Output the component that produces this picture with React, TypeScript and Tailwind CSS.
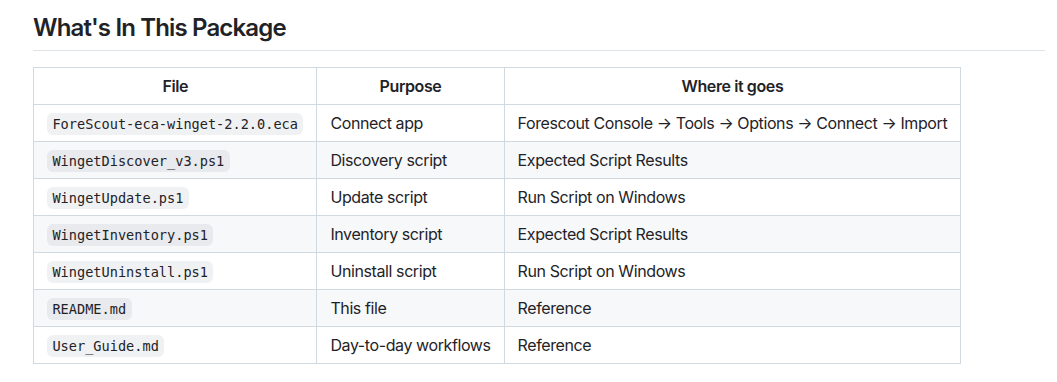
import React from "react";

const rows: [string, string, string][] = [
  ["ForeScout-eca-winget-2.2.0.eca", "Connect app", "Forescout Console → Tools → Options → Connect → Import"],
  ["WingetDiscover_v3.ps1", "Discovery script", "Expected Script Results"],
  ["WingetUpdate.ps1", "Update script", "Run Script on Windows"],
  ["WingetInventory.ps1", "Inventory script", "Expected Script Results"],
  ["WingetUninstall.ps1", "Uninstall script", "Run Script on Windows"],
  ["README.md", "This file", "Reference"],
  ["User_Guide.md", "Day-to-day workflows", "Reference"],
];

export default function App() {
  return (
    <div className="bg-white w-[1057px] h-[382px] pl-[33px] pr-[12px] pt-[13px] text-[#1f2328] font-['Inter','Liberation_Sans',sans-serif] text-[16px] leading-[1.5]">
      <h2 className="text-[24px] font-semibold leading-[1.25] tracking-[-0.85px] pb-[7px] border-b border-[#d1d9e0b3] mb-[16px]">
        What's In This Package
      </h2>
      <table className="border-collapse tracking-[-0.4px]">
        <thead>
          <tr className="bg-white">
            <th className="border border-[#d1d9e0] px-[13px] py-[6px] font-semibold text-center">File</th>
            <th className="border border-[#d1d9e0] px-[13px] py-[6px] font-semibold text-center">Purpose</th>
            <th className="border border-[#d1d9e0] px-[13px] py-[6px] font-semibold text-center">Where it goes</th>
          </tr>
        </thead>
        <tbody>
          {rows.map((r, i) => (
            <tr key={i} className={i % 2 === 1 ? "bg-[#f6f8fa]" : "bg-white"}>
              <td className="border border-[#d1d9e0] px-[13px] py-[6px]">
                <code className="font-['DejaVu_Sans_Mono','Liberation_Mono',monospace] tracking-normal text-[13.6px] px-[0.4em] py-[0.2em] rounded-[6px] bg-[#818b981f]">
                  {r[0]}
                </code>
              </td>
              <td className="border border-[#d1d9e0] px-[13px] py-[6px]">{r[1]}</td>
              <td className="border border-[#d1d9e0] px-[13px] py-[6px]">{r[2]}</td>
            </tr>
          ))}
        </tbody>
      </table>
    </div>
  );
}
